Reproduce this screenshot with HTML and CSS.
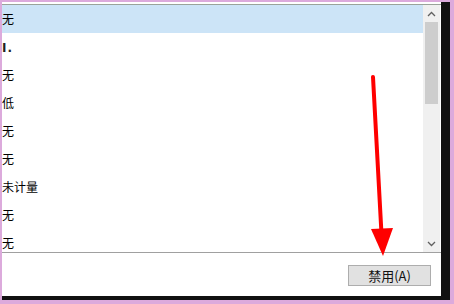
FILE: index.html
```html
<!DOCTYPE html>
<html>
<head>
<meta charset="utf-8">
<link rel="stylesheet" href="styles.css">
</head>
<body>
<div class="frame">
  <div class="window">
    <div class="listbox">
      <div class="rows">
        <div class="row selected">无</div>
        <div class="row"><span class="cut">I.</span></div>
        <div class="row">无</div>
        <div class="row">低</div>
        <div class="row">无</div>
        <div class="row">无</div>
        <div class="row">未计量</div>
        <div class="row">无</div>
        <div class="row">无</div>
      </div>
      <div class="scrollbar">
        <div class="sb-btn">
          <svg width="9" height="6" viewBox="0 0 9 6"><path d="M1 5 L4.5 1.5 L8 5" fill="none" stroke="#606060" stroke-width="1.3"/></svg>
        </div>
        <div class="sb-track"><div class="sb-thumb"></div></div>
        <div class="sb-btn">
          <svg width="9" height="6" viewBox="0 0 9 6"><path d="M1 1 L4.5 4.5 L8 1" fill="none" stroke="#606060" stroke-width="1.3"/></svg>
        </div>
      </div>
    </div>
    <div class="footer">
      <button class="btn">禁用(A)</button>
    </div>
    <svg class="arrow" width="454" height="304" viewBox="0 0 454 304">
      <path d="M373 77 L381.5 234" stroke="#ff0000" stroke-width="4" stroke-linecap="round" fill="none"/>
      <path d="M371 229 L393 228 L383 256 Z" fill="#ff0000"/>
    </svg>
  </div>
</div>
</body>
</html>
```

FILE: styles.css
```css
html, body {
  margin: 0;
  padding: 0;
  background: #dcaadc;
}
body {
  width: 454px;
  height: 304px;
  overflow: hidden;
  font-family: "Noto Sans CJK SC", "Noto Sans", sans-serif;
}
.frame {
  width: 454px;
  height: 304px;
  box-sizing: border-box;
  padding: 2px 4px 4px 2px;
}
.window {
  position: relative;
  height: 100%;
  box-sizing: border-box;
  background: #fff;
  border-right: 9px solid #111111;
  border-bottom: 4px solid #111111;
  display: flex;
  flex-direction: column;
}
.listbox {
  margin-top: 2px;
  height: 249px;
  box-sizing: border-box;
  border-top: 1px solid #9aa39a;
  border-bottom: 1px solid #a0a0a0;
  display: flex;
}
.rows {
  flex: 1;
  overflow: hidden;
}
.row {
  height: 28px;
  line-height: 28px;
  font-size: 12px;
  color: #000;
  white-space: nowrap;
}
.row.selected {
  background: #cce4f7;
}
.cut {
  color: #222;
  font-family: "DejaVu Sans", sans-serif;
  font-size: 12px;
  font-weight: bold;
  letter-spacing: 1px;
}
.scrollbar {
  width: 17px;
  margin-right: 1px;
  background: #f0f0f0;
  display: flex;
  flex-direction: column;
}
.sb-btn {
  height: 17px;
  display: flex;
  align-items: center;
  justify-content: center;
}
.sb-track {
  flex: 1;
  padding: 0 2px;
}
.sb-thumb {
  height: 82px;
  background: #cdcdcd;
}
.footer {
  flex: 1;
  display: flex;
  justify-content: flex-end;
  align-items: flex-start;
  padding: 12px 10px 0 0;
}
.btn {
  width: 83px;
  height: 21px;
  margin: 0;
  padding: 0;
  background: #e1e1e1;
  border: 1px solid #adadad;
  font-family: "Noto Sans CJK SC", "Noto Sans", sans-serif;
  font-size: 13px;
  color: #111;
  line-height: 19px;
}
.arrow {
  position: absolute;
  left: -2px;
  top: -2px;
  pointer-events: none;
}
```
